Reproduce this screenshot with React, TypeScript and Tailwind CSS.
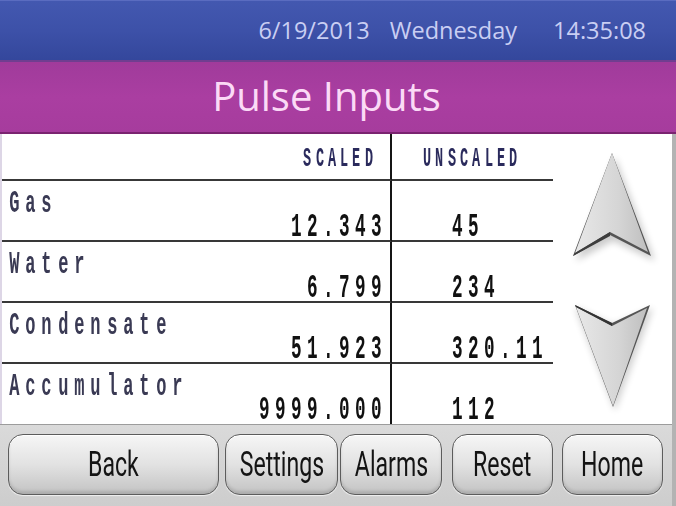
import React from "react";

// Fixed-pitch LCD style text: every character sits in its own cell, and the
// glyph is squeezed horizontally so it looks like the panel's narrow font.
function ValueText({ text }: { text: string }) {
  return (
    <span className="flex leading-none">
      {text.split("").map((c, i) => (
        <span key={i} className="flex w-[16px] justify-center">
          <span className="inline-block scale-x-[0.52] text-[34px] font-bold leading-none">{c}</span>
        </span>
      ))}
    </span>
  );
}

function LabelText({ text }: { text: string }) {
  return (
    <span className="flex leading-none">
      {text.split("").map((c, i) => (
        <span key={i} className="flex w-[16.3px] justify-center">
          <span className="inline-block scale-x-[0.55] text-[31px] font-bold leading-none">{c}</span>
        </span>
      ))}
    </span>
  );
}

function HeadText({ text }: { text: string }) {
  return (
    <span className="flex leading-none">
      {text.split("").map((c, i) => (
        <span key={i} className="flex w-[12.3px] justify-center">
          <span className="inline-block scale-x-[0.5] text-[27px] font-bold leading-none">{c}</span>
        </span>
      ))}
    </span>
  );
}

const rows = [
  { name: "Gas", scaled: "12.343", raw: "45" },
  { name: "Water", scaled: "6.799", raw: "234" },
  { name: "Condensate", scaled: "51.923", raw: "320.11" },
  { name: "Accumulator", scaled: "9999.000", raw: "112" },
];

function Arrows() {
  return (
    <svg viewBox="0 0 119 290" className="h-full w-full">
      <defs>
        <linearGradient id="face" x1="0" y1="0" x2="1" y2="0">
          <stop offset="0" stopColor="#e8e8e8" />
          <stop offset="0.6" stopColor="#d5d5d5" />
          <stop offset="1" stopColor="#bfbfbf" />
        </linearGradient>
        <filter id="soft" x="-30%" y="-30%" width="160%" height="160%">
          <feGaussianBlur stdDeviation="3.5" />
        </filter>
      </defs>
      {/* up arrow: light face, dark bevel on the right edge and the lower-left notch edge */}
      <polygon points="62,23 102,127 60,107 23,127" fill="#000" opacity="0.2" filter="url(#soft)" />
      <polygon points="59,19 98,122 57,101 20,122" fill="#555" />
      <polygon points="59,19 95,118 57,98 22,119" fill="url(#face)" />
      <polygon points="22,119 57,98 57,102 20,122" fill="#3d3d3d" />
      {/* down arrow: dark bevel on the upper-left notch edge and the right edge */}
      <polygon points="22,173 60,191 100,174 62,277" fill="#000" opacity="0.18" filter="url(#soft)" />
      <polygon points="22,171 59,189 97,171 60,273" fill="#555" />
      <polygon points="23,173 59,192 94,174 60,272" fill="url(#face)" />
      <polygon points="22,171 59,189 59,192 23,173" fill="#333" />
    </svg>
  );
}

const btn =
  "h-[61px] flex items-center justify-center rounded-[15px] border border-[#5c5c5c] bg-linear-to-b from-[#f6f6f6] via-[#e2e2e2] to-[#c3c3c3] shadow-[inset_0_1px_0_#ffffff,inset_0_-3px_3px_rgba(0,0,0,0.12),0_1px_1px_rgba(255,255,255,0.7)]";
const btnText =
  "inline-block scale-x-[0.66] text-[35px] leading-none text-[#141414] font-['Roboto',sans-serif]";

export default function App() {
  return (
    <div className="flex h-[506px] w-[676px] flex-col overflow-hidden bg-white font-['Liberation_Mono',monospace]">
      {/* date / day / clock strip */}
      <div className="flex h-[60px] items-center justify-end border-t border-[#5a6cc0] bg-linear-to-b from-[#4358b0] via-[#3d51a8] to-[#34479c] pr-[30px] font-['Open_Sans',sans-serif] text-[23.5px] text-[#c9cef3]">
        <span>6/19/2013</span>
        <span className="ml-[20px]">Wednesday</span>
        <span className="ml-[36px]">14:35:08</span>
      </div>

      {/* page title */}
      <div className="flex h-[74px] items-center justify-center border-t-2 border-b-2 border-t-[#6f3e90] border-b-[#7a2470] bg-linear-to-b from-[#a03b9b] via-[#aa3ea1] to-[#a63c9d] pr-[23px] pb-[2px] font-['Open_Sans',sans-serif] text-[40px] text-[#fbdaf6]">
        Pulse Inputs
      </div>

      <div className="flex flex-1">
        <div className="flex w-[672px] flex-col">
          {/* readings */}
          <div className="flex h-[290px] border-l-2 border-[#ddd6e6] bg-white">
            <div className="grid w-[551px] grid-cols-[390px_161px] grid-rows-[47px_61px_61px_61px_60px]">
              <div className="flex items-center justify-end border-r-2 border-b-2 border-r-[#151515] border-b-[#383838] pt-[6px] pr-[15px] text-[#2a2a5c]">
                <HeadText text="SCALED" />
              </div>
              <div className="flex items-center border-b-2 border-[#383838] pt-[6px] pl-[29px] text-[#2a2a5c]">
                <HeadText text="UNSCALED" />
              </div>
              {rows.map((r, i) => {
                const last = i === rows.length - 1;
                return (
                  <React.Fragment key={r.name}>
                    <div
                      className={
                        last
                          ? "flex flex-col border-r-2 border-r-[#151515]"
                          : "flex flex-col border-r-2 border-b-2 border-r-[#151515] border-b-[#383838]"
                      }
                    >
                      <div className="flex pl-[4px] pt-[7px] text-[#3a3a54]">
                        <LabelText text={r.name} />
                      </div>
                      <div className="mt-[-9px] flex justify-end pr-[6px] text-[#111]">
                        <ValueText text={r.scaled} />
                      </div>
                    </div>
                    <div
                      className={
                        last
                          ? "flex flex-col"
                          : "flex flex-col border-b-2 border-[#383838]"
                      }
                    >
                      <div className="h-[29px] shrink-0" />
                      <div className="flex pl-[57px] text-[#111]">
                        <ValueText text={r.raw} />
                      </div>
                    </div>
                  </React.Fragment>
                );
              })}
            </div>
            <div className="flex-1">
              <Arrows />
            </div>
          </div>

          {/* navigation buttons */}
          <div className="flex flex-1 items-start border-t border-[#9c9c9c] bg-linear-to-b from-[#dadada] to-[#cdcdcd] pt-[9px]">
            <div className={`${btn} ml-[8px] w-[211px]`}>
              <span className={btnText}>Back</span>
            </div>
            <div className={`${btn} ml-[6px] w-[113px]`}>
              <span className={btnText}>Settings</span>
            </div>
            <div className={`${btn} ml-[2px] w-[102px]`}>
              <span className={btnText}>Alarms</span>
            </div>
            <div className={`${btn} ml-[10px] w-[101px]`}>
              <span className={btnText}>Reset</span>
            </div>
            <div className={`${btn} ml-[9px] w-[101px]`}>
              <span className={btnText}>Home</span>
            </div>
          </div>
        </div>
        <div className="w-[4px] bg-[#b3b3b3]" />
      </div>
    </div>
  );
}
